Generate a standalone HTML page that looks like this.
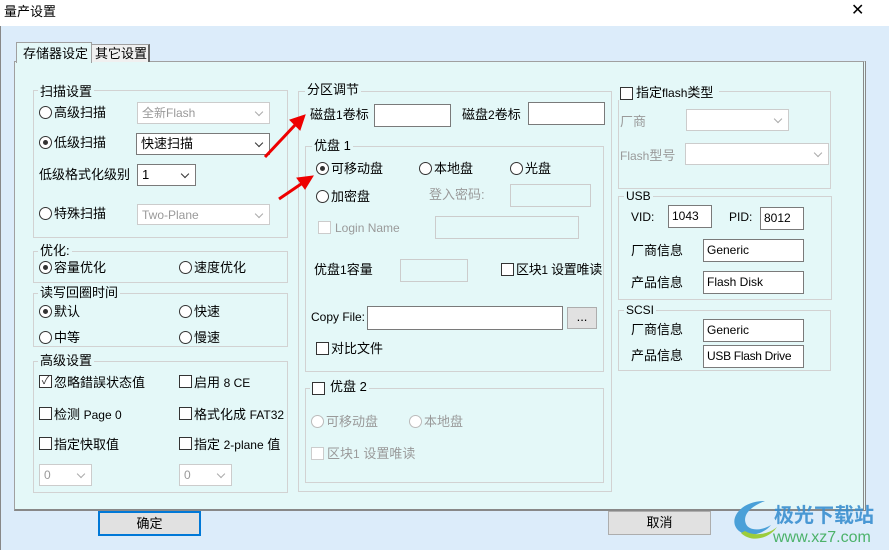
<!DOCTYPE html><html><head><meta charset="utf-8"><style>
*{margin:0;padding:0;box-sizing:border-box}
body{width:889px;height:550px;position:relative;overflow:hidden;background:#dcecfa;font-family:"Liberation Sans","Noto Sans CJK SC",sans-serif;font-size:13px;color:#000}
div,span{position:absolute}
.t{line-height:16px;white-space:nowrap}
.g{color:#9a9a9a}
.box{border:1px solid #d2d2d2}
.lbl{background:#e4f8f8;padding:0 2px;line-height:14px}
.in{background:#fff;border:1px solid #7a7a7a;padding-left:3px;line-height:20px;white-space:nowrap;font-size:12px;overflow:hidden}
.dis{border:1px solid #ccc;background:#e4f8f8}
.cb{width:13px;height:13px;border:1px solid #333;background:#fff}
.cbg{width:13px;height:13px;border:1px solid #ccc;background:#fff}
.rd{width:13px;height:13px;border:1px solid #333;border-radius:50%;background:#fff}
.rd.on::after{content:"";position:absolute;left:3px;top:3px;width:5px;height:5px;border-radius:50%;background:#333}
.rdg{width:13px;height:13px;border:1px solid #bbb;border-radius:50%;background:#fff}
.combo{background:#fff;border:1px solid #7a7a7a;padding-left:4px;line-height:20px}
.combo::after,.dcombo::after{content:"";position:absolute;right:7px;top:6px;width:5px;height:5px;border-right:1px solid #333;border-bottom:1px solid #333;transform:rotate(45deg)}
.dcombo{border:1px solid #ccc;background:#fff;padding-left:4px;line-height:20px;color:#999;font-size:12px}
.dcombo::after{border-color:#aaa}
.btn{background:#e1e1e1;border:1px solid #adadad;text-align:center;line-height:22px}
.s{font-size:12px}
</style></head><body>
<div style="left:0;top:0;width:889px;height:26px;background:#fff"></div>
<div class="t" style="left:4px;top:4px;font-size:13px">量产设置</div>
<div class="t" style="left:851px;top:3px;font-size:16px">✕</div>
<div style="left:0;top:26px;width:1px;height:524px;background:#888"></div>
<div style="left:14px;top:61px;width:852px;height:450px;background:#e4f8f8;border:1px solid #a0a0a0;border-right:3px double #888;border-bottom:2px solid #888"></div>
<div style="left:16px;top:42px;width:76px;height:21px;background:#e4f8f8;border:1px solid #a0a0a0;border-bottom:none"></div>
<div class="t" style="left:23px;top:46px">存储器设定</div>
<div style="left:91px;top:44px;width:59px;height:18px;background:#f0f0f0;border:1px solid #a0a0a0;border-bottom:none;border-right:2px solid #666"></div>
<div class="t" style="left:95px;top:46px">其它设置</div>

<div class="box" style="left:33px;top:90px;width:255px;height:148px"></div>
<div class="t lbl" style="left:38px;top:85px">扫描设置</div>
<div class="rd" style="left:39px;top:106px"></div><div class="t" style="left:54px;top:105px">高级扫描</div>
<div class="dcombo" style="left:137px;top:102px;width:133px;height:22px">全新Flash</div>
<div class="rd on" style="left:39px;top:136px"></div><div class="t" style="left:54px;top:135px">低级扫描</div>
<div class="combo" style="left:136px;top:133px;width:134px;height:22px">快速扫描</div>
<div class="t" style="left:39px;top:167px">低级格式化级别</div>
<div class="combo" style="left:137px;top:164px;width:59px;height:22px">1</div>
<div class="rd" style="left:39px;top:207px"></div><div class="t" style="left:54px;top:206px">特殊扫描</div>
<div class="dcombo" style="left:137px;top:204px;width:133px;height:21px">Two-Plane</div>

<div class="box" style="left:33px;top:251px;width:255px;height:32px"></div>
<div class="t lbl" style="left:38px;top:244px">优化:</div>
<div class="rd on" style="left:39px;top:261px"></div><div class="t" style="left:54px;top:260px">容量优化</div>
<div class="rd" style="left:179px;top:261px"></div><div class="t" style="left:194px;top:260px">速度优化</div>

<div class="box" style="left:33px;top:293px;width:255px;height:54px"></div>
<div class="t lbl" style="left:38px;top:286px">读写回圈时间</div>
<div class="rd on" style="left:39px;top:305px"></div><div class="t" style="left:54px;top:304px">默认</div>
<div class="rd" style="left:179px;top:305px"></div><div class="t" style="left:194px;top:304px">快速</div>
<div class="rd" style="left:39px;top:331px"></div><div class="t" style="left:54px;top:330px">中等</div>
<div class="rd" style="left:179px;top:331px"></div><div class="t" style="left:194px;top:330px">慢速</div>

<div class="box" style="left:33px;top:361px;width:255px;height:132px"></div>
<div class="t lbl" style="left:38px;top:354px">高级设置</div>
<div class="cb" style="left:39px;top:375px;font-size:11px;line-height:11px;text-align:center;color:#333">✓</div><div class="t" style="left:54px;top:375px">忽略錯誤状态值</div>
<div class="cb" style="left:179px;top:375px"></div><div class="t" style="left:194px;top:375px">启用 <span class="s" style="position:static">8 CE</span></div>
<div class="cb" style="left:39px;top:407px"></div><div class="t" style="left:54px;top:407px">检测 <span class="s" style="position:static">Page 0</span></div>
<div class="cb" style="left:179px;top:407px"></div><div class="t" style="left:194px;top:407px">格式化成 <span class="s" style="position:static">FAT32</span></div>
<div class="cb" style="left:39px;top:437px"></div><div class="t" style="left:54px;top:437px">指定快取值</div>
<div class="cb" style="left:179px;top:437px"></div><div class="t" style="left:194px;top:437px">指定 <span class="s" style="position:static">2-plane</span> 值</div>
<div class="dcombo" style="left:39px;top:464px;width:53px;height:22px">0</div>
<div class="dcombo" style="left:179px;top:464px;width:53px;height:22px">0</div>

<div class="box" style="left:298px;top:91px;width:314px;height:401px"></div>
<div class="t lbl" style="left:305px;top:83px">分区调节</div>
<div class="t" style="left:310px;top:107px">磁盘<span class="s" style="position:static">1</span>卷标</div>
<div class="in" style="left:374px;top:104px;width:77px;height:23px"></div>
<div class="t" style="left:462px;top:107px">磁盘<span class="s" style="position:static">2</span>卷标</div>
<div class="in" style="left:528px;top:102px;width:77px;height:23px"></div>

<div class="box" style="left:305px;top:146px;width:299px;height:226px"></div>
<div class="t lbl" style="left:312px;top:139px">优盘 1</div>
<div class="rd on" style="left:316px;top:162px"></div><div class="t" style="left:331px;top:161px">可移动盘</div>
<div class="rd" style="left:419px;top:162px"></div><div class="t" style="left:434px;top:161px">本地盘</div>
<div class="rd" style="left:510px;top:162px"></div><div class="t" style="left:525px;top:161px">光盘</div>
<div class="rd" style="left:316px;top:190px"></div><div class="t" style="left:331px;top:189px">加密盘</div>
<div class="t g" style="left:429px;top:187px">登入密码:</div>
<div class="dis" style="left:510px;top:184px;width:81px;height:23px"></div>
<div class="cbg" style="left:318px;top:221px"></div><div class="t g s" style="left:335px;top:220px">Login Name</div>
<div class="dis" style="left:435px;top:216px;width:144px;height:23px"></div>
<div class="t" style="left:314px;top:262px">优盘<span class="s" style="position:static">1</span>容量</div>
<div class="dis" style="left:400px;top:259px;width:68px;height:23px"></div>
<div class="cb" style="left:501px;top:263px"></div><div class="t" style="left:516px;top:262px;letter-spacing:-0.3px">区块<span class="s" style="position:static">1</span> 设置唯读</div>
<div class="t s" style="left:311px;top:309px">Copy File:</div>
<div class="in" style="left:367px;top:306px;width:196px;height:24px"></div>
<div class="btn" style="left:567px;top:307px;width:30px;height:22px;line-height:18px">...</div>
<div class="cb" style="left:316px;top:342px"></div><div class="t" style="left:331px;top:341px">对比文件</div>

<div class="box" style="left:305px;top:388px;width:299px;height:95px"></div>
<div class="t lbl" style="left:310px;top:380px;padding-left:20px">优盘 2</div>
<div class="cb" style="left:312px;top:382px"></div>
<div class="rdg" style="left:311px;top:415px"></div><div class="t g" style="left:326px;top:414px">可移动盘</div>
<div class="rdg" style="left:409px;top:415px"></div><div class="t g" style="left:424px;top:414px">本地盘</div>
<div class="cbg" style="left:311px;top:447px"></div><div class="t g" style="left:327px;top:446px">区块<span class="s" style="position:static">1</span> 设置唯读</div>

<div class="box" style="left:618px;top:91px;width:213px;height:98px"></div>
<div class="t lbl" style="left:618px;top:86px;padding-left:18px;padding-right:6px">指定<span class="s" style="position:static">flash</span>类型</div>
<div class="cb" style="left:620px;top:87px"></div>
<div class="t g" style="left:620px;top:114px">厂商</div>
<div class="dcombo" style="left:686px;top:109px;width:103px;height:22px"></div>
<div class="t g" style="left:620px;top:148px"><span class="s" style="position:static">Flash</span>型号</div>
<div class="dcombo" style="left:685px;top:143px;width:144px;height:22px"></div>

<div class="box" style="left:618px;top:196px;width:214px;height:104px"></div>
<div class="t lbl s" style="left:624px;top:189px">USB</div>
<div class="t s" style="left:631px;top:209px">VID:</div>
<div class="in" style="left:668px;top:205px;width:44px;height:23px">1043</div>
<div class="t s" style="left:729px;top:209px">PID:</div>
<div class="in" style="left:760px;top:207px;width:44px;height:23px">8012</div>
<div class="t" style="left:631px;top:243px">厂商信息</div>
<div class="in" style="left:703px;top:239px;width:101px;height:23px">Generic</div>
<div class="t" style="left:631px;top:275px">产品信息</div>
<div class="in" style="left:703px;top:271px;width:101px;height:23px">Flash Disk</div>

<div class="box" style="left:618px;top:310px;width:213px;height:61px"></div>
<div class="t lbl s" style="left:624px;top:303px">SCSI</div>
<div class="t" style="left:631px;top:322px">厂商信息</div>
<div class="in" style="left:703px;top:319px;width:101px;height:23px">Generic</div>
<div class="t" style="left:631px;top:348px">产品信息</div>
<div class="in" style="left:703px;top:345px;width:101px;height:23px;letter-spacing:-0.3px">USB Flash Drive</div>

<div class="btn" style="left:98px;top:511px;width:103px;height:25px;border:2px solid #0078d7;line-height:21px">确定</div>
<div class="btn" style="left:608px;top:511px;width:103px;height:24px">取消</div>

<svg style="position:absolute;left:0;top:0" width="889" height="550">
<g stroke="#e00" stroke-width="3" fill="#e00">
<line x1="265" y1="157" x2="296" y2="124"/>
<polygon points="305,115 290,120 300,130" stroke-width="1"/>
<line x1="279" y1="199" x2="304" y2="182"/>
<polygon points="313,176 297,178 305,189" stroke-width="1"/>
</g>
<g transform="translate(733,503)">
<path d="M32 -2 C6 -2 -6 18 6 28 C16 36 32 30 38 22 C28 28 16 28 13 21 C9 12 18 3 32 -2Z" fill="#4aa0d8"/>
<path d="M8 30 C18 40 36 36 44 24 C36 31 22 34 12 28Z" fill="#9ccc3c"/>
</g>
<text x="774" y="522" font-family="Liberation Sans,Noto Sans CJK SC,sans-serif" font-size="20" font-weight="bold" fill="#3a8fd0" opacity="0.9">极光下载站</text>
<text x="773" y="542" font-family="Liberation Sans,sans-serif" font-size="16" fill="#4cb26a">www.xz7.com</text>
</svg>
</body></html>
